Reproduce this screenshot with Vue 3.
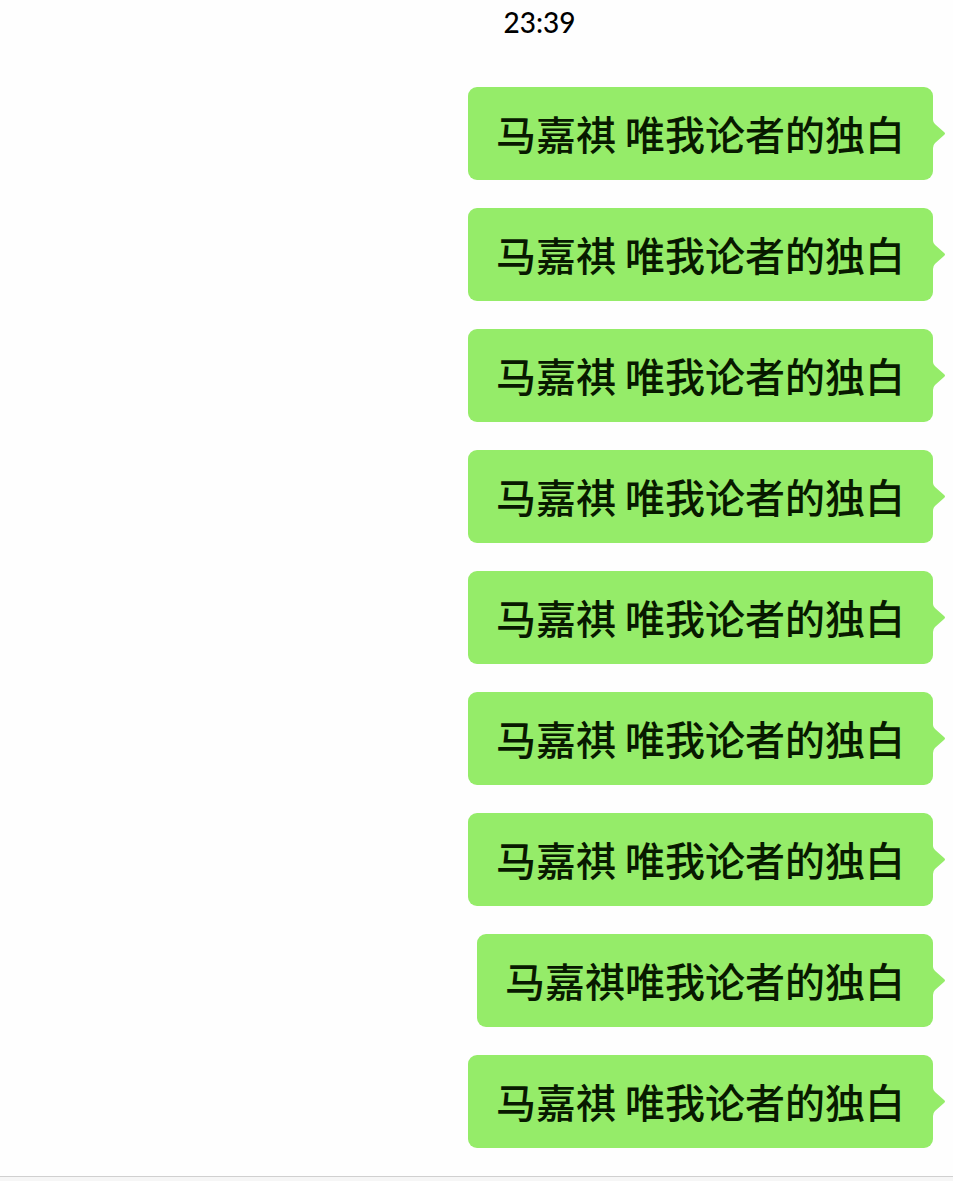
<script setup>
import { ref } from "vue";

const time = ref("23:39");

const messages = ref([
  { id: 1, text: "马嘉祺 唯我论者的独白" },
  { id: 2, text: "马嘉祺 唯我论者的独白" },
  { id: 3, text: "马嘉祺 唯我论者的独白" },
  { id: 4, text: "马嘉祺 唯我论者的独白" },
  { id: 5, text: "马嘉祺 唯我论者的独白" },
  { id: 6, text: "马嘉祺 唯我论者的独白" },
  { id: 7, text: "马嘉祺 唯我论者的独白" },
  { id: 8, text: "马嘉祺唯我论者的独白" },
  { id: 9, text: "马嘉祺 唯我论者的独白" },
]);
</script>

<template>
  <main class="chat">
    <time class="time">{{ time }}</time>

    <ul class="messages">
      <li v-for="m in messages" :key="m.id" class="bubble">
        {{ m.text }}
        <svg class="tail" viewBox="0 0 12 28" aria-hidden="true">
          <path d="M0 0 Q0 2 2 4 L11 12 Q13 13.5 11 15 L2 23 Q0 25 0 28 Z" />
        </svg>
      </li>
    </ul>

    <footer class="bar"></footer>
  </main>
</template>

<style>
body { margin: 0; background: #fefefe; }
</style>

<style scoped>
.chat {
  display: flex;
  flex-direction: column;
  min-height: 100vh;
  color: #081a00;
  font-family: "Noto Sans CJK SC", sans-serif;
}

.time {
  padding: 4px 0 0 126px;
  font-family: Lato, sans-serif;
  font-size: 28px;
  font-weight: 500;
  line-height: 36px;
  text-align: center;
  color: #000;
}

.messages {
  display: flex;
  flex-direction: column;
  align-items: flex-end;
  gap: 28px;
  margin: 0;
  padding: 47px 20px 28px;
  list-style: none;
}

.bubble {
  position: relative;
  padding: 18px 28px;
  border-radius: 9px;
  background: #95ec69;
  font-size: 40px;
  font-weight: 500;
  line-height: 57px;
  white-space: nowrap;
}

/* arrow on the right edge */
.tail {
  position: absolute;
  top: 33px;
  left: 100%;
  width: 12px;
  height: 28px;
  fill: #95ec69;
}

.bar {
  flex: 1;
  min-height: 4px;
  border-top: 1px solid #d0d0d0;
  background: #f6f6f6;
}
</style>
